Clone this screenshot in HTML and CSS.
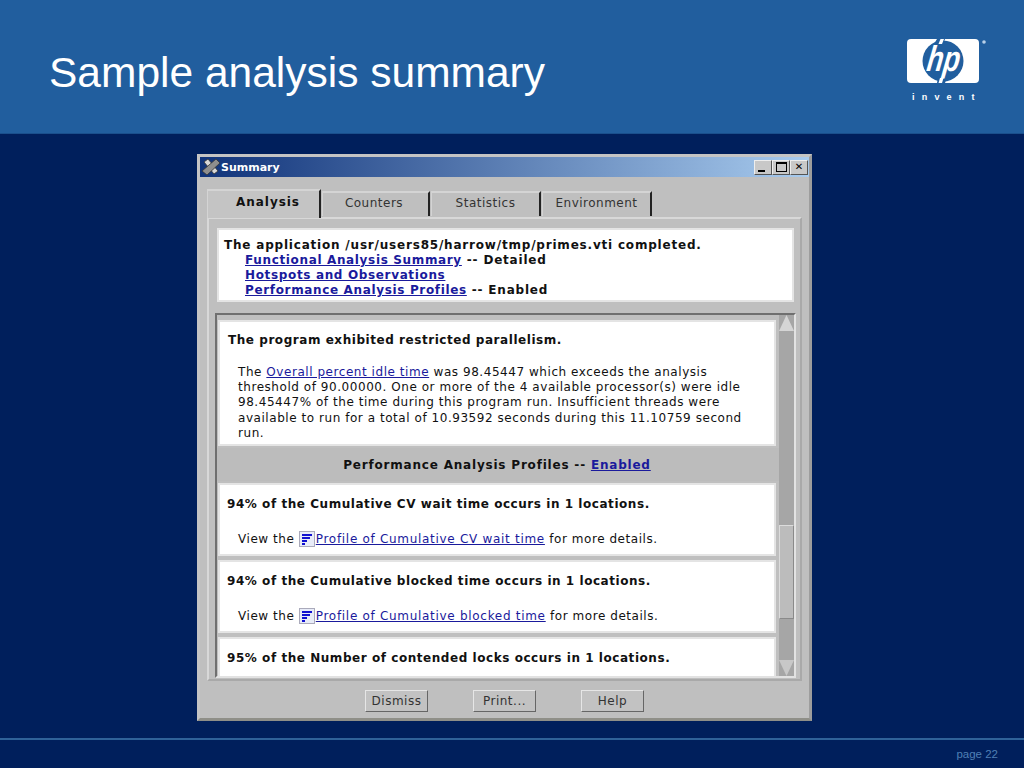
FILE: index.html
```html
<!DOCTYPE html>
<html lang="en">
<head>
<meta charset="utf-8">
<title>Sample analysis summary</title>
<link rel="stylesheet" href="styles.css">
</head>
<body>
<div class="slide">
  <header class="head">
    <h1 class="title">Sample analysis summary</h1>
    <div class="logo">
      <svg class="logo-mark" width="80" height="46" viewBox="0 0 80 46">
        <rect x="0" y="1" width="72" height="44" rx="4" fill="#fff"/>
        <circle cx="36" cy="23" r="20.500" fill="#215e9e"/>
        <path d="M30 1 L38 1 L36 6 L27 6 Z" fill="#215e9e"/>
        <path d="M33.500 1 L37 1 L35 6 L31.500 6 Z" fill="#fff"/>
        <path d="M31 40 L40 40 L38 45 L30 45 Z" fill="#215e9e"/>
        <path d="M33 40 L36.500 40 L35 45 L31.500 45 Z" fill="#fff"/>
        <text class="logo-hp" x="35" y="33" text-anchor="middle" textLength="33" lengthAdjust="spacingAndGlyphs" transform="skewX(-8) translate(5 0)">hp</text>
        <circle cx="77" cy="4" r="1.800" fill="#b9d0e8"/>
      </svg>
      <div class="invent">invent</div>
    </div>
  </header>
  <main class="stage">
    <section class="win">
      <div class="titlebar">
        <svg class="tb-icon" width="18" height="16" viewBox="0 0 18 16">
          <path d="M2 3 L6 0 L16 12 L12 15 Z" fill="#d8d8d8" stroke="#333" stroke-width=".8"/>
          <path d="M14 0 L18 4 L5 16 L0 12 Z" fill="#8e8e8e" stroke="#333" stroke-width=".8"/>
        </svg>
        <span class="tb-title">Summary</span>
        <span class="tb-btns">
          <span class="tb-btn"><i class="g-min"></i></span>
          <span class="tb-btn"><i class="g-max"></i></span>
          <span class="tb-btn tb-close">✕</span>
        </span>
      </div>
      <div class="tabs">
        <span class="tab tab-on">Analysis</span>
        <span class="tab t2">Counters</span>
        <span class="tab t3">Statistics</span>
        <span class="tab t4">Environment</span>
      </div>
      <div class="panel">
        <div class="intro">
          <div class="b">The application /usr/users85/harrow/tmp/primes.vti completed.</div>
          <div class="b ind"><a href="#">Functional Analysis Summary</a> -- Detailed</div>
          <div class="b ind"><a href="#">Hotspots and Observations</a></div>
          <div class="b ind"><a href="#">Performance Analysis Profiles</a> -- Enabled</div>
        </div>
        <div class="scroller">
          <div class="content">
            <div class="card c1">
              <div class="b head-line">The program exhibited restricted parallelism.</div>
              <div class="para">
                <div>The <a href="#">Overall percent idle time</a> was 98.45447 which exceeds the analysis</div>
                <div>threshold of 90.00000. One or more of the 4 available processor(s) were idle</div>
                <div>98.45447% of the time during this program run. Insufficient threads were</div>
                <div>available to run for a total of 10.93592 seconds during this 11.10759 second</div>
                <div>run.</div>
              </div>
            </div>
            <div class="band b"><span>Performance Analysis Profiles -- <a href="#">Enabled</a></span></div>
            <div class="card c2">
              <div class="b head-line">94% of the Cumulative CV wait time occurs in 1 locations.</div>
              <div class="view">View the <span class="prof"><svg width="16" height="16" viewBox="0 0 16 16"><rect x=".5" y=".5" width="15" height="15" fill="#e8ecf8" stroke="#aab"/><path d="M3 3h10v2H3zM3 6h8v2H3zM3 9h5v2H3zM3 12h3v2H3z" fill="#1010d0"/></svg></span><a href="#">Profile of Cumulative CV wait time</a> for more details.</div>
            </div>
            <div class="card c2">
              <div class="b head-line">94% of the Cumulative blocked time occurs in 1 locations.</div>
              <div class="view">View the <span class="prof"><svg width="16" height="16" viewBox="0 0 16 16"><rect x=".5" y=".5" width="15" height="15" fill="#e8ecf8" stroke="#aab"/><path d="M3 3h10v2H3zM3 6h8v2H3zM3 9h5v2H3zM3 12h3v2H3z" fill="#1010d0"/></svg></span><a href="#">Profile of Cumulative blocked time</a> for more details.</div>
            </div>
            <div class="card c3">
              <div class="b head-line">95% of the Number of contended locks occurs in 1 locations.</div>
            </div>
          </div>
          <div class="sbar">
            <span class="arrow up"></span>
            <span class="sb-space"></span>
            <span class="thumb"></span>
            <span class="sb-rest"></span>
            <span class="arrow down"></span>
          </div>
        </div>
      </div>
      <div class="actions">
        <button class="btn">Dismiss</button>
        <button class="btn">Print...</button>
        <button class="btn">Help</button>
      </div>
    </section>
  </main>
  <footer class="foot"><span class="page">page 22</span></footer>
</div>
</body>
</html>
```
FILE: styles.css
```css
* { box-sizing: border-box; }
html, body { margin: 0; padding: 0; }
body { width: 1024px; height: 768px; overflow: hidden; background: #001f5c; }
.slide { width: 1024px; height: 768px; display: flex; flex-direction: column; }
.head { height: 134px; flex: none; background: #215e9e; display: flex; justify-content: space-between; padding: 0 38px 0 49px; border-bottom: 1px solid #1a4f8c; }
.title { margin: 48px 0 0; font: 400 42.500px/50px "Liberation Sans", Arial, sans-serif; color: #fff; }
.logo { margin-top: 38px; width: 80px; margin-right: -1px; }
.logo-mark { display: block; }
.logo-hp { font: italic 700 36px "Liberation Sans", sans-serif; fill: #fff; }
.invent { margin-top: 7px; width: 72px; padding-left: 5px; font: 700 9px/13px "Liberation Sans", sans-serif; color: #fff; letter-spacing: 7.200px; white-space: nowrap; }

.stage { flex: 1; padding: 20px 0 0 197px; }
.win { width: 615px; height: 567px; background: #bfbfbf; border: 3px solid #c4c4c4; border-right-color: #9d9d9d; border-bottom-color: #8f8f88; display: flex; flex-direction: column; font: 12px/15px "DejaVu Sans", sans-serif; color: #111; }
.titlebar { height: 20px; flex: none; background: linear-gradient(90deg, #10337a, #a8cbee); display: flex; align-items: center; color: #fff; padding-left: 2px; }
.tb-icon { flex: none; }
.tb-title { margin-left: 1px; font-weight: 700; font-size: 11px; }
.tb-btns { margin-left: auto; display: flex; margin-right: 1px; }
.tb-btn { width: 18px; height: 15px; background: #c8c8c8; border: 1px solid; border-color: #eee #555 #555 #eee; display: flex; align-items: center; justify-content: center; color: #000; font-size: 10px; line-height: 12px; }
.g-min { width: 7px; height: 2px; background: #000; margin-top: 7px; margin-right: 3px; }
.g-max { width: 11px; height: 10px; border: 1px solid #000; border-top-width: 2px; }
.tabs { height: 40px; flex: none; display: flex; align-items: flex-end; padding-left: 7px; }
.tab { height: 25px; flex: none; background: #bfbfbf; border-top: 2px solid #d4d4d4; border-left: 1px solid #d4d4d4; border-right: 2px solid #222; color: #333; display: flex; align-items: center; justify-content: center; letter-spacing: .5px; margin-right: 1px; margin-bottom: 1px; padding-bottom: 3px; }
.tab-on { width: 114px; height: 29px; margin-bottom: -1px; position: relative; z-index: 1; color: #111; font-weight: 700; letter-spacing: .95px; padding-bottom: 5px; padding-left: 9px; background: #c4c4c4; }
.t2 { width: 108px; padding-right: 3px; }
.t3 { width: 110px; }
.t4 { width: 110px; }
.panel { width: 595px; margin-left: 7px; height: 464px; flex: none; border: 2px solid; border-color: #d8d8d8 #a9a9a9 #a9a9a9 #d8d8d8; padding: 9px 8px 0 6px; }
.intro { width: 577px; margin-left: 2px; height: 74px; background: #fff; border: 2px solid #e4e4e4; padding: 8px 0 0 5px; font-size: 12px; line-height: 15px; white-space: nowrap; }
.intro .b { letter-spacing: .8px; }
.intro a { letter-spacing: .65px; }
.b { font-weight: 700; letter-spacing: .55px; }
.ind { padding-left: 21px; }
a { color: #1a1a9c; }
.scroller { margin-top: 11px; width: 581px; height: 365px; border: 2px solid; border-color: #6f6f6f #e2e2e2 #e2e2e2 #6f6f6f; display: flex; overflow: hidden; white-space: nowrap; }
.content { width: 562px; flex: none; overflow: hidden; padding: 5px 3px 0 1px; }
.card { background: #fff; border: 2px solid #e4e4e4; width: 558px; margin-bottom: 3px; }
.head-line { padding-top: 11px; }
.c1 { height: 126px; margin-bottom: 2px; }
.c1 .head-line { padding-left: 8px; }
.c2 { height: 73px; margin-bottom: 4px; }
.c2 .head-line, .c3 .head-line { padding: 12px 0 0 7px; }
.c3 { height: 60px; }
.para { margin-top: 17px; padding-left: 18px; line-height: 15.200px; letter-spacing: .55px; }
.view { margin-top: 19px; padding-left: 18px; letter-spacing: .55px; }
.view a { letter-spacing: .7px; }
.prof { display: inline-block; vertical-align: -4px; margin: 0 1px 0 0; line-height: 0; }
.band { height: 33px; margin: 0 -1px 2px -1px; width: 562px; background: #bcbcbc; display: flex; align-items: center; justify-content: center; letter-spacing: .8px; padding: 2px 2px 0 0; }
.sbar { width: 15px; flex: none; background: #a6a6a6; display: flex; flex-direction: column; }
.arrow { height: 16px; flex: none; }
.up { clip-path: polygon(50% 0, 100% 100%, 0 100%); background: #d5d5d5; }
.down { clip-path: polygon(0 0, 100% 0, 50% 100%); background: #c8c8c8; }
.sb-space { height: 194px; flex: none; }
.thumb { height: 94px; flex: none; background: #bcbcbc; border: 1px solid; border-color: #dcdcdc #8a8a8a #8a8a8a #dcdcdc; }
.sb-rest { flex: 1; }
.actions { flex: 1; display: flex; align-items: flex-start; padding: 9px 0 0 165px; gap: 45px; }
.btn { width: 63px; height: 22px; padding: 0; background: #c2c2c2; border: 1px solid; border-color: #e6e6e6 #666 #666 #e6e6e6; font: 12px/18px "DejaVu Sans", sans-serif; letter-spacing: .5px; color: #333; }
.foot { height: 30px; flex: none; border-top: 2px solid #2f6299; display: flex; justify-content: flex-end; align-items: center; padding: 0 26px 1px 0; }
.page { font: 11.500px "Liberation Sans", sans-serif; color: #4f7fb5; }
```
